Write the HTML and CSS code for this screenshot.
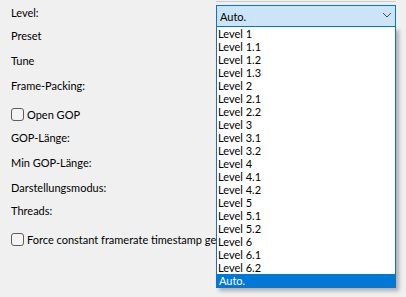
FILE: index.html
```html
<!DOCTYPE html>
<html>
  <head>
    <title>Encoder settings</title>
    <link rel="stylesheet" href="styles.css">
  </head>
  <body>
    <div class="form">
      <div class="row r-top"><span></span><div class="stub"></div></div>
      <div class="row r-level">
        <label>Level:</label>
        <div class="combo">
          <span>Auto.</span>
          <svg class="chev" width="10" height="6" viewBox="0 0 10 6"><path d="M1 1 L5 5 L9 1" fill="none" stroke="#4a4a4a" stroke-width="1"/></svg>
          <ul class="list">
            <li>Level 1</li>
            <li>Level 1.1</li>
            <li>Level 1.2</li>
            <li>Level 1.3</li>
            <li>Level 2</li>
            <li>Level 2.1</li>
            <li>Level 2.2</li>
            <li>Level 3</li>
            <li>Level 3.1</li>
            <li>Level 3.2</li>
            <li>Level 4</li>
            <li>Level 4.1</li>
            <li>Level 4.2</li>
            <li>Level 5</li>
            <li>Level 5.1</li>
            <li>Level 5.2</li>
            <li>Level 6</li>
            <li>Level 6.1</li>
            <li>Level 6.2</li>
            <li class="sel">Auto.</li>
          </ul>
        </div>
      </div>
      <div class="row r-preset"><label>Preset</label></div>
      <div class="row r-tune"><label>Tune</label></div>
      <div class="row r-frame"><label>Frame-Packing:</label></div>
      <div class="row r-gop"><label class="check"><span class="box"></span>Open GOP</label></div>
      <div class="row r-goplen"><label>GOP-Länge:</label></div>
      <div class="row r-mingop"><label>Min GOP-Länge:</label></div>
      <div class="row r-mode"><label>Darstellungsmodus:</label></div>
      <div class="row r-threads"><label>Threads:</label></div>
      <div class="row r-force"><label class="check wide"><span class="box"></span>Force constant framerate timestamp generation</label></div>
    </div>
  </body>
</html>
```
FILE: styles.css
```css
html, body {
  margin: 0px;
  padding: 0px;
  background-color: #f0f0f0;
  overflow: hidden;
}
body {
  width: 406px;
  height: 297px;
  font-family: "Lato", "Liberation Sans", sans-serif;
  font-size: 11px;
  color: #000;
}
.form {
  padding-left: 11px;
}
.row {
  display: grid;
  grid-template-columns: 205px 180px;
  height: 13px;
  line-height: 13px;
}
.row label {
  white-space: nowrap;
}
.r-top { height: 1px; }
.stub {
  height: 1px;
  border-bottom: 1px solid #cdcdcd;
}
.r-level { margin-top: 4px; height: 22px; }
.r-level > label { margin-top: 1px; }
.r-preset { margin-top: 2px; }
.r-tune { margin-top: 12px; }
.r-frame { margin-top: 12px; }
.r-gop { margin-top: 16px; }
.r-goplen { margin-top: 10px; }
.r-mingop { margin-top: 12px; }
.r-mode { margin-top: 12px; }
.r-threads { margin-top: 10px; }
.r-force { margin-top: 16px; }

.check {
  display: flex;
  align-items: center;
  gap: 3px;
}
.check.wide {
  grid-column: 1 / 3;
}
.box {
  width: 11px;
  height: 11px;
  border: 1px solid #5c5c5c;
  border-radius: 3px;
  background-color: #f4f4f4;
}

.combo {
  position: relative;
  height: 20px;
  border: 1px solid #0078d7;
  background-color: #cce4f7;
  display: flex;
  align-items: center;
  padding-left: 3px;
  z-index: 2;
}
.combo .chev {
  position: absolute;
  right: 3px;
  top: 6px;
}
.list {
  position: absolute;
  top: 21px;
  left: -1px;
  right: -1px;
  margin: 0px;
  padding: 0px;
  list-style: none;
  background-color: #fff;
  border: 1px solid #1f6fc0;
  border-top: 0px;
  box-shadow: 3px 3px 4px rgba(0, 0, 0, 0.28);
}
.list li {
  height: 13px;
  line-height: 13px;
  padding-left: 1px;
  white-space: nowrap;
}
.list li.sel {
  background-color: #0078d7;
  color: #fff;
  padding-left: 2px;
}
```
